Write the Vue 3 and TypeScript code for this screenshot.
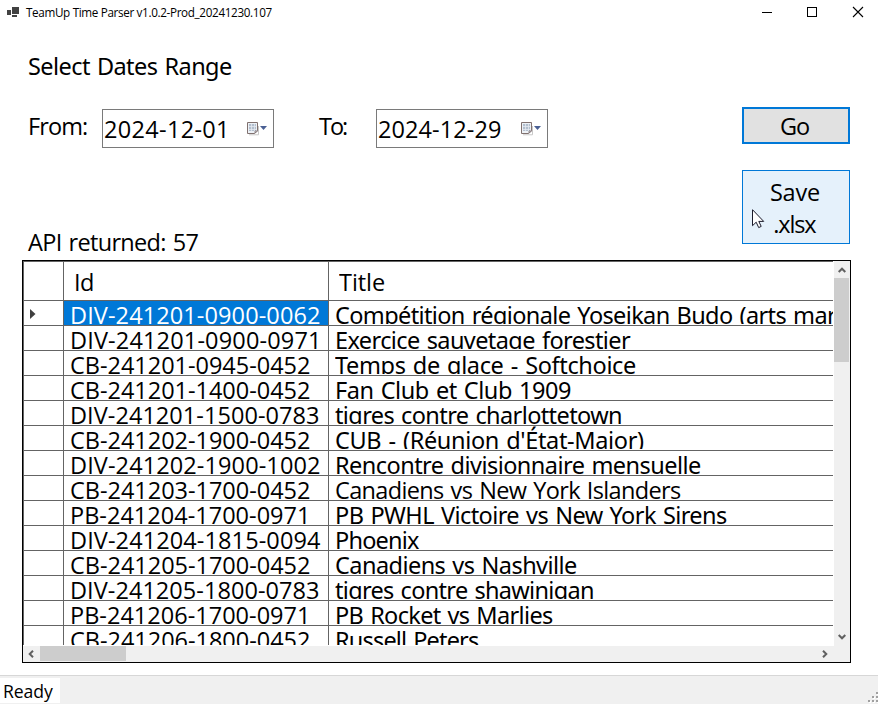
<script setup lang="ts">
interface Row {
  id: string
  idWidth: number
  title: string
  titleWidth: number
}

const rows: Row[] = [
  { id: 'DIV-241201-0900-0062', idWidth: 248, title: 'Compétition régionale Yoseikan Budo (arts mar', titleWidth: 501 },
  { id: 'DIV-241201-0900-0971', idWidth: 245, title: 'Exercice sauvetage forestier', titleWidth: 294 },
  { id: 'CB-241201-0945-0452', idWidth: 239, title: 'Temps de glace - Softchoice', titleWidth: 301 },
  { id: 'CB-241201-1400-0452', idWidth: 239, title: 'Fan Club et Club 1909', titleWidth: 234 },
  { id: 'DIV-241201-1500-0783', idWidth: 247, title: 'tigres contre charlottetown', titleWidth: 286 },
  { id: 'CB-241202-1900-0452', idWidth: 239, title: "CUB - (Réunion d'État-Major)", titleWidth: 308 },
  { id: 'DIV-241202-1900-1002', idWidth: 248, title: 'Rencontre divisionnaire mensuelle', titleWidth: 364 },
  { id: 'CB-241203-1700-0452', idWidth: 239, title: 'Canadiens vs New York Islanders', titleWidth: 345 },
  { id: 'PB-241204-1700-0971', idWidth: 234, title: 'PB PWHL Victoire vs New York Sirens', titleWidth: 390 },
  { id: 'DIV-241204-1815-0094', idWidth: 248, title: 'Phoenix', titleWidth: 83 },
  { id: 'CB-241205-1700-0452', idWidth: 239, title: 'Canadiens vs Nashville', titleWidth: 241 },
  { id: 'DIV-241205-1800-0783', idWidth: 247, title: 'tigres contre shawinigan', titleWidth: 258 },
  { id: 'PB-241206-1700-0971', idWidth: 234, title: 'PB Rocket vs Marlies', titleWidth: 216 },
  { id: 'CB-241206-1800-0452', idWidth: 239, title: 'Russell Peters', titleWidth: 142 },
]

const dates = [
  { label: 'From:', labelWidth: 57, value: '2024-12-01', valueWidth: 120, key: 'from' },
  { label: 'To:', labelWidth: 28, value: '2024-12-29', valueWidth: 122, key: 'to' },
]

// Tracks a label out or in so that its drawn width equals the given pixels.
const vFit = {
  mounted(el: HTMLElement, binding: { value: number }) {
    const ctx = document.createElement('canvas').getContext('2d')
    if (!ctx) return
    const text = el.textContent ?? ''
    const cs = getComputedStyle(el)
    ctx.font = `${cs.fontWeight} ${cs.fontSize} ${cs.fontFamily}`
    const m = ctx.measureText(text)
    const gaps = (text.split(' ').length - 1) * (parseFloat(cs.wordSpacing) || 0)
    const ink = m.actualBoundingBoxRight + m.actualBoundingBoxLeft + gaps
    const spacing = (binding.value - ink) / Math.max(1, text.length - 1)
    el.style.letterSpacing = `${spacing}px`
    el.style.marginRight = `${-spacing}px`
  },
}
</script>

<template>
  <div class="window">
    <header class="titlebar">
      <svg class="app-icon" width="12" height="11" viewBox="0 0 12 11" shape-rendering="crispEdges">
        <path d="M5 0h7v7H5zM0 3h4v5H0zM5 8h5v2H5z" fill="#424242" />
      </svg>
      <span v-fit="246.5" class="caption">TeamUp Time Parser v1.0.2-Prod_20241230.107</span>
      <div class="controls">
        <svg width="12" height="12" viewBox="0 0 12 12" shape-rendering="crispEdges"><path d="M2 6.5h10" stroke="#000" /></svg>
        <svg width="12" height="12" viewBox="0 0 12 12" shape-rendering="crispEdges"><path d="M1.5 1.5h9v9h-9z" stroke="#000" fill="none" /></svg>
        <svg width="12" height="12" viewBox="0 0 12 12"><path d="M1 1l10 10M11 1L1 11" stroke="#000" stroke-width="1.1" /></svg>
      </div>
    </header>

    <main class="content">
      <section class="form">
        <div class="fields">
          <h1 class="heading"><span v-fit="203">Select Dates Range</span></h1>
          <div class="dates">
            <div v-for="d in dates" :key="d.key" class="field" :class="d.key">
              <label class="field-label"><span v-fit="d.labelWidth">{{ d.label }}</span></label>
              <div class="picker">
                <span v-fit="d.valueWidth" class="value">{{ d.value }}</span>
                <svg class="calendar" width="22" height="14" viewBox="0 0 22 14">
                  <path d="M2 12.8h9.5V4" stroke="#c8c8c8" fill="none" />
                  <path d="M.5.5h10v8.2l-2.8 2.8H.5z" fill="#edf1f6" stroke="#80716f" />
                  <path d="M2 2h7v7H2z" fill="#b2bfce" />
                  <path d="M2 4.5h7M2 7.5h7M4.5 2v7M7.5 2v7" stroke="#e4e9f0" stroke-width=".8" />
                  <path d="M8 11V9h2.500z" fill="#fff" stroke="#786c70" stroke-width=".8" />
                  <path d="M13 4h7l-3.500 4z" fill="#4a6094" />
                </svg>
              </div>
            </div>
          </div>
          <p class="result"><span v-fit="170.5">API returned: 57</span></p>
        </div>
        <div class="actions">
          <button class="btn go"><span v-fit="28">Go</span></button>
          <button class="btn save">
            <span v-fit="48">Save</span>
            <span v-fit="42">.xlsx</span>
            <svg class="pointer" width="13" height="20" viewBox="0 0 13 20">
              <path d="M.5.700v16l3.700-3.500 2.500 5.400 2.500-1.200-2.400-5h4.900z" fill="#fff" stroke="#1b1b2b" />
            </svg>
          </button>
        </div>
      </section>

      <section class="grid">
        <div class="table">
          <div class="row head">
            <div class="cell"></div>
            <div class="cell"><span v-fit="17">Id</span></div>
            <div class="cell"><span v-fit="45">Title</span></div>
          </div>
          <div v-for="(r, i) in rows" :key="r.id" class="row" :class="{ current: i === 0 }">
            <div class="cell marker">
              <svg v-if="i === 0" width="6" height="10" viewBox="0 0 6 10"><path d="M0 0l5.500 5L0 10z" fill="#404040" /></svg>
            </div>
            <div class="cell id"><span v-fit="r.idWidth">{{ r.id }}</span></div>
            <div class="cell" :class="{ humanist: !r.title.includes('I') }"><span v-fit="r.titleWidth">{{ r.title }}</span></div>
          </div>
        </div>
        <div class="vbar">
          <svg width="8" height="6" viewBox="0 0 8 6"><path d="M.7 5L4 1.700 7.300 5" /></svg>
          <div class="thumb"></div>
          <svg width="8" height="6" viewBox="0 0 8 6"><path d="M.7 1L4 4.300 7.300 1" /></svg>
        </div>
        <div class="hbar">
          <svg width="6" height="8" viewBox="0 0 6 8"><path d="M5 .7L1.700 4 5 7.300" /></svg>
          <div class="thumb"></div>
          <svg width="6" height="8" viewBox="0 0 6 8"><path d="M1 .7L4.300 4 1 7.300" /></svg>
        </div>
        <div class="corner"></div>
      </section>
    </main>

    <footer class="status">
      <span class="ready"><span v-fit="49">Ready</span></span>
      <svg class="grip" width="10" height="12" viewBox="0 0 10 12" shape-rendering="crispEdges">
        <path d="M9 1h1v2H9zM5 5h2v2H5zM9 5h1v2H9zM1 9h2v2H1zM5 9h2v2H5zM9 9h1v2H9z" fill="#fff" />
        <path d="M8 0h2v2H8zM4 4h2v2H4zM8 4h2v2H8zM0 8h2v2H0zM4 8h2v2H4zM8 8h2v2H8z" fill="#a0a0a0" />
      </svg>
    </footer>
  </div>
</template>

<style>
body {
  background: #fff;
  overflow: hidden;
}
</style>

<style scoped>
* {
  box-sizing: border-box;
}
svg {
  display: block;
  flex: none;
}
.window {
  display: flex;
  flex-direction: column;
  width: 878px;
  height: 704px;
  overflow: hidden;
  background: #fff;
  color: #000;
  font: 400 23.500px/32px 'Open Sans', 'Noto Sans', sans-serif;
  word-spacing: 1.500px;
  white-space: nowrap;
}
.titlebar {
  display: flex;
  align-items: center;
  height: 26px;
  padding: 0 14px 2px 7px;
}
.caption {
  margin-left: 7px;
  font-size: 11.700px;
  line-height: 18px;
  padding-bottom: 1px;
  word-spacing: 0;
}
.controls {
  display: flex;
  gap: 34px;
  margin-left: auto;
}
.content {
  height: 649px;
}
.form {
  display: flex;
  justify-content: space-between;
  height: 234px;
  padding: 0 28px 0 27px;
}
.heading {
  margin: 0;
  padding: 24px 0 0 1px;
  font: inherit;
}
.heading,
.humanist {
  font-family: 'Noto Sans', 'Open Sans', sans-serif;
}
.dates {
  display: flex;
  gap: 45px;
  margin-top: 27px;
}
.field {
  display: flex;
}
.field-label {
  width: 75px;
  padding: 1px 0 0 1px;
}
.to .field-label {
  width: 57px;
  padding-left: 0;
}
.picker {
  display: flex;
  align-items: center;
  justify-content: space-between;
  width: 172px;
  height: 39px;
  padding: 0 4px 0 1px;
  border: 1px solid #7a7a7a;
}
.value {
  padding-top: 1px;
}
.calendar {
  margin-top: 1px;
}
.result {
  margin: 78px 0 0;
  padding-left: 1px;
}
.actions {
  display: flex;
  flex-direction: column;
  gap: 26px;
  padding-top: 81px;
}
.btn {
  position: relative;
  display: flex;
  flex-direction: column;
  align-items: center;
  justify-content: center;
  width: 108px;
  padding: 0 2px 0 0;
  color: #000;
  font: inherit;
}
.go {
  height: 37px;
  border: 2px solid #0078d7;
  background: #e1e1e1;
}
.save {
  height: 74px;
  padding-top: 2px;
  border: 1px solid #0078d7;
  background: #e5f1fb;
}
.pointer {
  position: absolute;
  left: 9px;
  top: 38px;
}
.grid {
  display: grid;
  grid-template-columns: 811px 16px;
  grid-template-rows: 385px 16px;
  width: 829px;
  height: 403px;
  margin-left: 22px;
  border: 1px solid #000;
}
.table {
  margin-right: 1px;
  margin-bottom: 1px;
  overflow: hidden;
  border-top: 1px solid #646464;
  border-left: 1px solid #646464;
}
.row {
  display: grid;
  grid-template-columns: 40px 265px 505px;
  height: 25px;
  border-bottom: 1px solid #646464;
}
.head {
  height: 39px;
}
.cell {
  overflow: hidden;
  height: 100%;
  padding-left: 6px;
  border-right: 1px solid #646464;
  line-height: 28px;
}
.cell > span {
  display: block;
  height: 23px;
  overflow: hidden;
}
.head .cell {
  padding: 4px 0 0 10px;
}
.head .cell > span {
  height: 32px;
  line-height: 32px;
}
.cell:last-child {
  border-right: 0;
}
.cell.marker {
  padding: 8px 0 0 6px;
}
.current .id {
  background: #0078d7;
  color: #fff;
}
.vbar,
.hbar {
  display: flex;
  align-items: center;
  justify-content: space-between;
  background: #f0f0f0;
}
.vbar {
  flex-direction: column;
  padding: 6px 0;
}
.hbar {
  padding: 0 6px 0 5px;
}
.vbar path,
.hbar path {
  fill: none;
  stroke: #606060;
  stroke-width: 2;
}
.thumb {
  background: #cdcdcd;
}
.vbar .thumb {
  width: 15px;
  height: 84px;
  margin: 5px 1px auto 0;
}
.hbar .thumb {
  width: 86px;
  height: 15px;
  margin: 0 auto 1px 6px;
}
.corner {
  background: #f0f0f0;
}
.status {
  display: flex;
  align-items: flex-start;
  justify-content: space-between;
  height: 29px;
  padding-top: 2px;
  border-top: 1px solid #d7d7d7;
  background: #f0f0f0;
}
.ready {
  width: 60px;
  height: 25px;
  padding-left: 3px;
  background: #fff;
  font-size: 17.600px;
  line-height: 27px;
}
.grip {
  margin-top: 14px;
}
</style>
